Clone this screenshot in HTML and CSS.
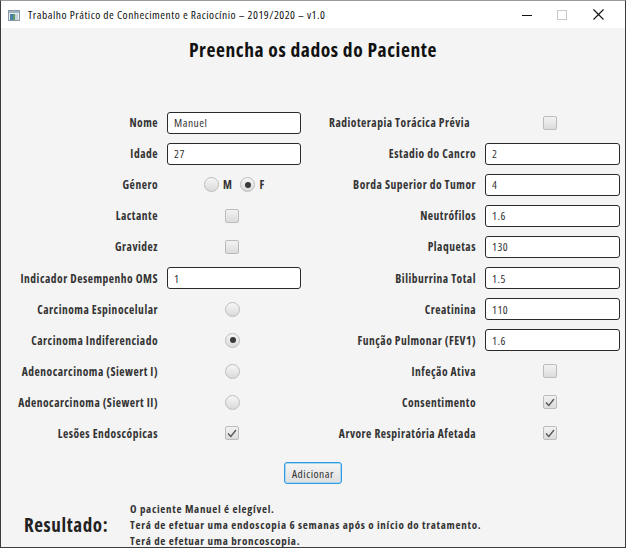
FILE: index.html
```html
<!DOCTYPE html>
<html lang="pt">
<head>
<meta charset="utf-8">
<title>Trabalho Prático</title>
<link rel="stylesheet" href="styles.css">
</head>
<body>
<div class="window">
  <div class="titlebar">
    <svg class="app-icon" width="12" height="11" viewBox="0 0 12 11">
      <rect x="0.5" y="0.5" width="11" height="10" fill="#e8eef2" stroke="#8a9aa6"/>
      <rect x="1" y="1" width="10" height="2" fill="#9fb3c2"/>
      <rect x="2" y="4" width="3" height="6" fill="#4a7fa8"/>
      <rect x="5" y="4" width="2" height="6" fill="#5b9a6a"/>
      <rect x="7" y="4" width="3" height="6" fill="#c9d3d9"/>
    </svg>
    <span class="title">Trabalho Prático de Conhecimento e Raciocínio – 2019/2020 – v1.0</span>
    <div class="win-controls">
      <span class="wbtn"><svg width="10" height="10" viewBox="0 0 10 10"><line x1="0" y1="5.5" x2="10" y2="5.5" stroke="#111" stroke-width="1"/></svg></span>
      <span class="wbtn"><svg width="10" height="10" viewBox="0 0 10 10"><rect x="0.5" y="0.5" width="9" height="9" fill="none" stroke="#c8c8c8"/></svg></span>
      <span class="wbtn"><svg width="11" height="11" viewBox="0 0 11 11"><path d="M0.5 0.5 L10.5 10.5 M10.5 0.5 L0.5 10.5" stroke="#111" stroke-width="1.1"/></svg></span>
    </div>
  </div>
  <main class="content">
    <h1 class="heading">Preencha os dados do Paciente</h1>
    <div class="form">
      <label class="lbl">Nome</label>
      <div class="ctl"><input class="field" type="text" value="Manuel"></div>
      <label class="lbl rlbl lbl-wide">Radioterapia Torácica Prévia</label>
      <div class="ctl box"><span class="check"></span></div>

      <label class="lbl">Idade</label>
      <div class="ctl"><input class="field" type="text" value="27"></div>
      <label class="lbl rlbl">Estadio do Cancro</label>
      <div class="ctl"><input class="field" type="text" value="2"></div>

      <label class="lbl">Género</label>
      <div class="ctl gender">
        <span class="radio"></span><span class="opt">M</span>
        <span class="radio on"></span><span class="opt">F</span>
      </div>
      <label class="lbl rlbl">Borda Superior do Tumor</label>
      <div class="ctl"><input class="field" type="text" value="4"></div>

      <label class="lbl">Lactante</label>
      <div class="ctl box"><span class="check"></span></div>
      <label class="lbl rlbl">Neutrófilos</label>
      <div class="ctl"><input class="field" type="text" value="1.6"></div>

      <label class="lbl">Gravidez</label>
      <div class="ctl box"><span class="check"></span></div>
      <label class="lbl rlbl">Plaquetas</label>
      <div class="ctl"><input class="field" type="text" value="130"></div>

      <label class="lbl">Indicador Desempenho OMS</label>
      <div class="ctl"><input class="field" type="text" value="1"></div>
      <label class="lbl rlbl">Biliburrina Total</label>
      <div class="ctl"><input class="field" type="text" value="1.5"></div>

      <label class="lbl">Carcinoma Espinocelular</label>
      <div class="ctl box"><span class="radio"></span></div>
      <label class="lbl rlbl">Creatinina</label>
      <div class="ctl"><input class="field" type="text" value="110"></div>

      <label class="lbl">Carcinoma Indiferenciado</label>
      <div class="ctl box"><span class="radio on"></span></div>
      <label class="lbl rlbl">Função Pulmonar (FEV1)</label>
      <div class="ctl"><input class="field" type="text" value="1.6"></div>

      <label class="lbl">Adenocarcinoma (Siewert I)</label>
      <div class="ctl box"><span class="radio"></span></div>
      <label class="lbl rlbl">Infeção Ativa</label>
      <div class="ctl box"><span class="check"></span></div>

      <label class="lbl">Adenocarcinoma (Siewert II)</label>
      <div class="ctl box"><span class="radio"></span></div>
      <label class="lbl rlbl">Consentimento</label>
      <div class="ctl box"><span class="check on"><svg width="10" height="9" viewBox="0 0 10 9"><path d="M1 4.5 L3.8 7.5 L9 1" fill="none" stroke="#555" stroke-width="1.3"/></svg></span></div>

      <label class="lbl">Lesões Endoscópicas</label>
      <div class="ctl box"><span class="check on"><svg width="10" height="9" viewBox="0 0 10 9"><path d="M1 4.5 L3.8 7.5 L9 1" fill="none" stroke="#555" stroke-width="1.3"/></svg></span></div>
      <label class="lbl rlbl">Arvore Respiratória Afetada</label>
      <div class="ctl box"><span class="check on"><svg width="10" height="9" viewBox="0 0 10 9"><path d="M1 4.5 L3.8 7.5 L9 1" fill="none" stroke="#555" stroke-width="1.3"/></svg></span></div>
    </div>
    <div class="actions"><button class="btn" type="button">Adicionar</button></div>
    <div class="result">
      <div class="result-label">Resultado:</div>
      <div class="result-text">
        <p>O paciente Manuel é elegível.</p>
        <p>Terá de efetuar uma endoscopia 6 semanas após o início do tratamento.</p>
        <p>Terá de efetuar uma broncoscopia.</p>
      </div>
    </div>
  </main>
</div>
</body>
</html>
```

FILE: styles.css
```css
* { box-sizing: border-box; }
html, body { margin: 0; padding: 0; }
body {
  width: 626px;
  height: 548px;
  overflow: hidden;
  font-family: "Open Sans", "Liberation Sans", sans-serif;
  font-stretch: 87.5%;
  letter-spacing: 0.5px;
  background: #f4f4f4;
}
.window {
  width: 626px;
  height: 548px;
  border: 1px solid #3c3c3c;
  border-top-color: #9a9a9a;
  background: #f4f4f4;
  display: flex;
  flex-direction: column;
  overflow: hidden;
}
.titlebar {
  height: 27px;
  background: #fff;
  display: flex;
  align-items: center;
  padding-left: 7px;
  flex: none;
}
.app-icon { display: block; margin-top: 1px; }
.title {
  margin-left: 8px;
  font-size: 11.5px;
  color: #111;
}
.win-controls {
  margin-left: auto;
  display: flex;
  height: 100%;
}
.wbtn {
  width: 35px;
  display: flex;
  align-items: center;
  justify-content: center;
}
.wbtn:last-child { width: 46px; padding-right: 8px; }
.content {
  flex: 1;
  display: flex;
  flex-direction: column;
}
.heading {
  margin: 0;
  padding-top: 10px;
  line-height: 24px;
  height: 34px;
  text-align: center;
  font-size: 19.5px;
  letter-spacing: 0.6px;
  font-weight: 700;
  color: #111;
}
.form {
  margin-top: 45px;
  display: grid;
  grid-template-columns: 166px 134px 184px 135px;
  grid-auto-rows: 31.1px;
  align-items: center;
}
.lbl {
  text-align: right;
  padding-right: 9px;
  font-size: 11.5px;
  font-weight: 700;
  color: #333;
  white-space: nowrap;
}
.rlbl { padding-right: 9px; }
.lbl-wide { padding-right: 15px; }
.ctl {
  display: flex;
  align-items: center;
  height: 22px;
}
.box { padding-left: 58px; }
.field {
  width: 100%;
  height: 22px;
  margin: 0;
  border: 1px solid #2a2a2a;
  border-radius: 3px;
  background: #fff;
  padding: 0 6px;
  font-family: inherit;
  font-stretch: 87.5%;
  letter-spacing: 0.5px;
  font-size: 11.5px;
  color: #333;
  outline: none;
}
.check {
  width: 14px;
  height: 14px;
  border: 1px solid #bcbcbc;
  border-radius: 2px;
  background: linear-gradient(#f2f2f2, #dcdcdc);
  display: flex;
  align-items: center;
  justify-content: center;
}
.radio {
  width: 15px;
  height: 15px;
  border: 1px solid #bdbdbd;
  border-radius: 50%;
  background: linear-gradient(#f6f6f6, #dadada);
  display: flex;
  align-items: center;
  justify-content: center;
}
.radio.on::after {
  content: "";
  width: 6px;
  height: 6px;
  border-radius: 50%;
  background: #3a3a3a;
}
.gender { padding-left: 37px; }
.opt {
  font-size: 11.5px;
  font-weight: 700;
  color: #333;
  margin-left: 4px;
  margin-right: 8px;
}
.actions {
  display: flex;
  justify-content: center;
  margin-top: 13px;
}
.btn {
  width: 58px;
  height: 22px;
  padding: 0;
  border: 1px solid #2e9be0;
  border-radius: 3px;
  box-shadow: inset 0 0 0 1px #a9d6f2;
  background: linear-gradient(#f5f5f5, #dedede);
  font-family: inherit;
  font-stretch: 87.5%;
  letter-spacing: 0.5px;
  font-size: 11.5px;
  color: #333;
}
.result {
  margin-top: 17px;
  display: flex;
  align-items: center;
  padding-left: 23px;
}
.result-label {
  width: 106px;
  font-size: 19px;
  letter-spacing: 0.6px;
  font-weight: 700;
  color: #222;
}
.result-text p {
  margin: 0;
  line-height: 16px;
  font-size: 11px;
  letter-spacing: 0.7px;
  font-weight: 700;
  color: #333;
  white-space: nowrap;
}
```
